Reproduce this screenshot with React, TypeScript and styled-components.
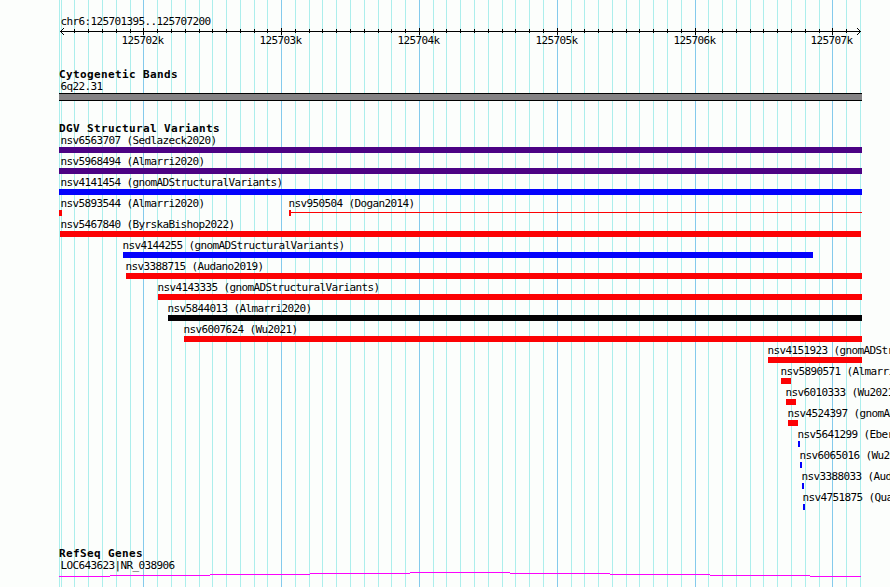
import React from "react";
import styled, { createGlobalStyle } from "styled-components";

const GlobalStyle = createGlobalStyle`
  html, body { margin: 0; padding: 0; overflow: hidden; background: #fcfefc; }
`;

const COLORS = {
  paper: "#fcfefc",
  minor: "#aceeec",
  major: "#84caec",
  indigo: "#4c0284",
  blue: "#0402fc",
  red: "#fc0204",
  black: "#040204",
  gene: "#fc02fc",
};

const Browser = styled.main`
  display: grid;
  width: 890px;
  height: 587px;
  overflow: hidden;
  background: ${COLORS.paper};
  color: #000;
  font-family: "DejaVu Sans Mono", "Liberation Mono", monospace;
`;

const GridLines = styled.svg`
  grid-area: 1 / 1;
  display: block;
`;

const Tracks = styled.div`
  grid-area: 1 / 1;
  z-index: 1;
  display: flex;
  flex-direction: column;
  min-width: 0;
`;

const Label = styled.div<{ $start?: number }>`
  height: 13px;
  padding-left: ${(p) => (p.$start ?? 60) + 0.5}px;
  font-size: 11px;
  line-height: 13px;
  letter-spacing: -0.623px;
  white-space: pre;
`;

const Title = styled.h2`
  box-sizing: border-box;
  margin: 0;
  height: 12px;
  padding: 1px 0 0 59px;
  font-size: 11px;
  font-weight: 700;
  line-height: 12px;
  letter-spacing: 0.377px;
  white-space: pre;
`;

const RulerSection = styled.section`
  height: 53px;
  padding-top: 15px;
`;

const Ruler = styled.svg`
  display: block;
  height: 7px;
`;

const RulerLabels = styled.div`
  display: flex;
  gap: 96px;
  padding-left: 121.5px;
  font-size: 11px;
  line-height: 11px;
  letter-spacing: -0.623px;
`;

const RulerLabel = styled.span<{ $shift: number }>`
  flex: none;
  width: 42px;
  margin-right: ${(p) => p.$shift}px;
  white-space: nowrap;
`;

const BandSection = styled.section`
  height: 54px;
`;

const Band = styled.div`
  box-sizing: border-box;
  width: 803px;
  height: 8px;
  margin-left: 59px;
  border: solid #000;
  border-width: 1px 0;
  background: #848284;
`;

const VariantSection = styled.section`
  height: 425px;
`;

const VariantRow = styled.div`
  display: grid;
  height: 21px;
`;

const Feature = styled.div`
  grid-area: 1 / 1;
`;

const Bar = styled.div<{ $start: number; $end: number; $color: string }>`
  width: ${(p) => p.$end - p.$start}px;
  height: 6px;
  margin-left: ${(p) => p.$start}px;
  background: ${(p) => p.$color};
`;

const Breakpoint = styled.div<{ $start: number; $end: number }>`
  display: flex;
  align-items: flex-start;
  width: ${(p) => p.$end - p.$start}px;
  height: 6px;
  margin-left: ${(p) => p.$start}px;
  &::before {
    content: "";
    width: 2px;
    height: 6px;
    background: ${COLORS.red};
  }
  &::after {
    content: "";
    flex: 1;
    height: 1px;
    margin-top: 2px;
    background: ${COLORS.red};
  }
`;

const Gene = styled.svg`
  display: block;
`;

const majorTicks = [143, 281, 419, 557, 695, 832];
const minorTicks = [
  61, 74, 88, 102, 116, 130, 157, 171, 185, 199, 212, 226, 240, 254, 267, 295,
  309, 322, 336, 350, 364, 378, 391, 405, 433, 446, 460, 474, 488, 502, 515,
  529, 543, 571, 584, 598, 612, 626, 639, 653, 667, 681, 708, 722, 736, 750,
  763, 777, 791, 805, 819, 846,
];
const edges = [59, 860];

const rulerLabels = [
  { text: "125702k", shift: 0 },
  { text: "125703k", shift: 0 },
  { text: "125704k", shift: 0 },
  { text: "125705k", shift: 0 },
  { text: "125706k", shift: -1 },
  { text: "125707k", shift: 0 },
];

type Variant = {
  name: string;
  label: number;
  start: number;
  end: number;
  color: string;
  open?: boolean;
};

const v = (
  name: string,
  label: number,
  start: number,
  end: number,
  color: string,
  open = false
): Variant => ({ name, label, start, end, color, open });

const rows: Variant[][] = [
  [v("nsv6563707 (Sedlazeck2020)", 60, 59, 862, COLORS.indigo)],
  [v("nsv5968494 (Almarri2020)", 60, 59, 862, COLORS.indigo)],
  [v("nsv4141454 (gnomADStructuralVariants)", 60, 59, 862, COLORS.blue)],
  [
    v("nsv5893544 (Almarri2020)", 60, 59, 62, COLORS.red),
    v("nsv950504 (Dogan2014)", 288, 289, 862, COLORS.red, true),
  ],
  [v("nsv5467840 (ByrskaBishop2022)", 60, 60, 861, COLORS.red)],
  [v("nsv4144255 (gnomADStructuralVariants)", 122, 123, 813, COLORS.blue)],
  [v("nsv3388715 (Audano2019)", 125, 126, 862, COLORS.red)],
  [v("nsv4143335 (gnomADStructuralVariants)", 157, 158, 862, COLORS.red)],
  [v("nsv5844013 (Almarri2020)", 167, 168, 862, COLORS.black)],
  [v("nsv6007624 (Wu2021)", 183, 184, 862, COLORS.red)],
  [v("nsv4151923 (gnomADStructuralVariants)", 767, 768, 862, COLORS.red)],
  [v("nsv5890571 (Almarri2020)", 780, 781, 791, COLORS.red)],
  [v("nsv6010333 (Wu2021)", 785, 786, 796, COLORS.red)],
  [v("nsv4524397 (gnomADStructuralVariants)", 787, 788, 798, COLORS.red)],
  [v("nsv5641299 (Ebert2021)", 797, 798, 800, COLORS.blue)],
  [v("nsv6065016 (Wu2021)", 799, 800, 802, COLORS.blue)],
  [v("nsv3388033 (Audano2019)", 801, 802, 804, COLORS.blue)],
  [v("nsv4751875 (Quan2021)", 802, 803, 805, COLORS.blue)],
];

export default function App() {
  return (
    <>
      <GlobalStyle />
      <Browser>
        <GridLines width="890" height="587" shapeRendering="crispEdges">
          {[...edges, ...minorTicks].map((x) => (
            <rect key={x} x={x} y="0" width="1" height="587" fill={COLORS.minor} />
          ))}
          {majorTicks.map((x) => (
            <rect key={x} x={x} y="0" width="1" height="587" fill={COLORS.major} />
          ))}
        </GridLines>
        <Tracks>
          <RulerSection>
            <Label>chr6:125701395..125707200</Label>
            <Ruler width="890" height="7" shapeRendering="crispEdges">
              <rect x="60" y="3" width="801" height="1" />
              {minorTicks.slice(1).map((x) => (
                <rect key={x} x={x} y="1" width="1" height="4" />
              ))}
              {majorTicks.map((x) => (
                <rect key={x} x={x} y="0" width="1" height="7" />
              ))}
              <path d="M63 0h1v1h-1zM62 1h1v1h-1zM61 2h1v1h-1zM61 4h1v1h-1zM62 5h1v1h-1zM63 6h1v1h-1z" />
              <path d="M857 0h1v1h-1zM858 1h1v1h-1zM859 2h1v1h-1zM859 4h1v1h-1zM858 5h1v1h-1zM857 6h1v1h-1z" />
            </Ruler>
            <RulerLabels>
              {rulerLabels.map((l) => (
                <RulerLabel key={l.text} $shift={l.shift}>
                  {l.text}
                </RulerLabel>
              ))}
            </RulerLabels>
          </RulerSection>
          <BandSection>
            <Title>Cytogenetic Bands</Title>
            <Label>6q22.31</Label>
            <Band />
          </BandSection>
          <VariantSection>
            <Title>DGV Structural Variants</Title>
            {rows.map((row) => (
              <VariantRow key={row[0].name}>
                {row.map((f) => (
                  <Feature key={f.name}>
                    <Label $start={f.label}>{f.name}</Label>
                    {f.open ? (
                      <Breakpoint $start={f.start} $end={f.end} />
                    ) : (
                      <Bar $start={f.start} $end={f.end} $color={f.color} />
                    )}
                  </Feature>
                ))}
              </VariantRow>
            ))}
          </VariantSection>
          <section>
            <Title>RefSeq Genes</Title>
            <Label>LOC643623|NR_038906</Label>
            <Gene width="890" height="6" shapeRendering="crispEdges" fill="none" stroke={COLORS.gene}>
              <path d="M59 4.5H110M110 3.5H210M210 2.5H310M310 1.5H410M410 .5H510M510 1.5H610M610 2.5H710M710 3.5H810M810 4.5H861" />
            </Gene>
          </section>
        </Tracks>
      </Browser>
    </>
  );
}
